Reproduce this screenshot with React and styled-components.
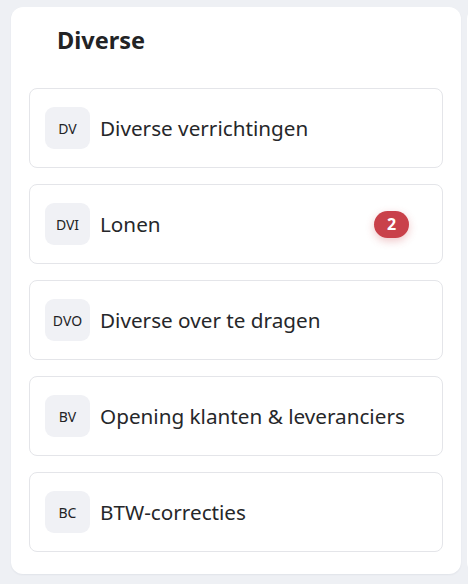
import React from "react";
import styled, { createGlobalStyle } from "styled-components";

const Global = createGlobalStyle`
  html, body { margin: 0; padding: 0; }
  body {
    background: #eef0f4;
    font-family: "Noto Sans", "Open Sans", Arial, sans-serif;
    overflow: hidden;
  }
`;

const Page = styled.div`
  display: flex;
  gap: 6px;
  padding: 7px 0 0 11px;
  width: 468px;
  height: 584px;
  box-sizing: border-box;
  overflow: hidden;
`;

const Card = styled.section`
  flex: 0 0 450px;
  height: 567px;
  box-sizing: border-box;
  background: #ffffff;
  border-radius: 12px;
  box-shadow: 0 1px 2px rgba(20, 30, 60, 0.06);
  padding: 18px 18px 22px;
  display: flex;
  flex-direction: column;
`;

const GhostCard = styled.div`
  flex: 0 0 300px;
  height: 567px;
  background: #ffffff;
  border-radius: 12px;
`;

const Title = styled.h2`
  margin: 0 0 33px;
  padding-left: 28px;
  font-size: 23.5px;
  line-height: 30px;
  font-weight: 700;
  color: #222325;
`;

const List = styled.div`
  display: flex;
  flex-direction: column;
  gap: 16px;
`;

const Item = styled.div`
  height: 80px;
  box-sizing: border-box;
  border: 1px solid #e4e5e9;
  border-radius: 8px;
  padding: 0 33px 0 15px;
  display: flex;
  align-items: center;
  gap: 10px;
`;

const Code = styled.div`
  flex: 0 0 45px;
  height: 42px;
  border-radius: 9px;
  background: #f0f1f5;
  display: flex;
  align-items: center;
  justify-content: center;
  font-size: 14px;
  color: #222325;
`;

const Label = styled.span`
  flex: 1;
  font-size: 20.7px;
  color: #26272a;
`;

const Count = styled.span`
  min-width: 35px;
  height: 27px;
  border-radius: 14px;
  background: #c9414a;
  color: #fff;
  font-weight: 700;
  font-size: 16px;
  display: flex;
  align-items: center;
  justify-content: center;
  box-shadow: 0 3px 8px rgba(201, 65, 74, 0.3);
`;

const items = [
  { code: "DV", label: "Diverse verrichtingen" },
  { code: "DVI", label: "Lonen", count: 2 },
  { code: "DVO", label: "Diverse over te dragen" },
  { code: "BV", label: "Opening klanten & leveranciers" },
  { code: "BC", label: "BTW-correcties" },
];

export default function App() {
  return (
    <>
      <Global />
      <Page>
        <Card>
          <Title>Diverse</Title>
          <List>
            {items.map((it) => (
              <Item key={it.code}>
                <Code>{it.code}</Code>
                <Label>{it.label}</Label>
                {it.count ? <Count>{it.count}</Count> : null}
              </Item>
            ))}
          </List>
        </Card>
        <GhostCard />
      </Page>
    </>
  );
}
